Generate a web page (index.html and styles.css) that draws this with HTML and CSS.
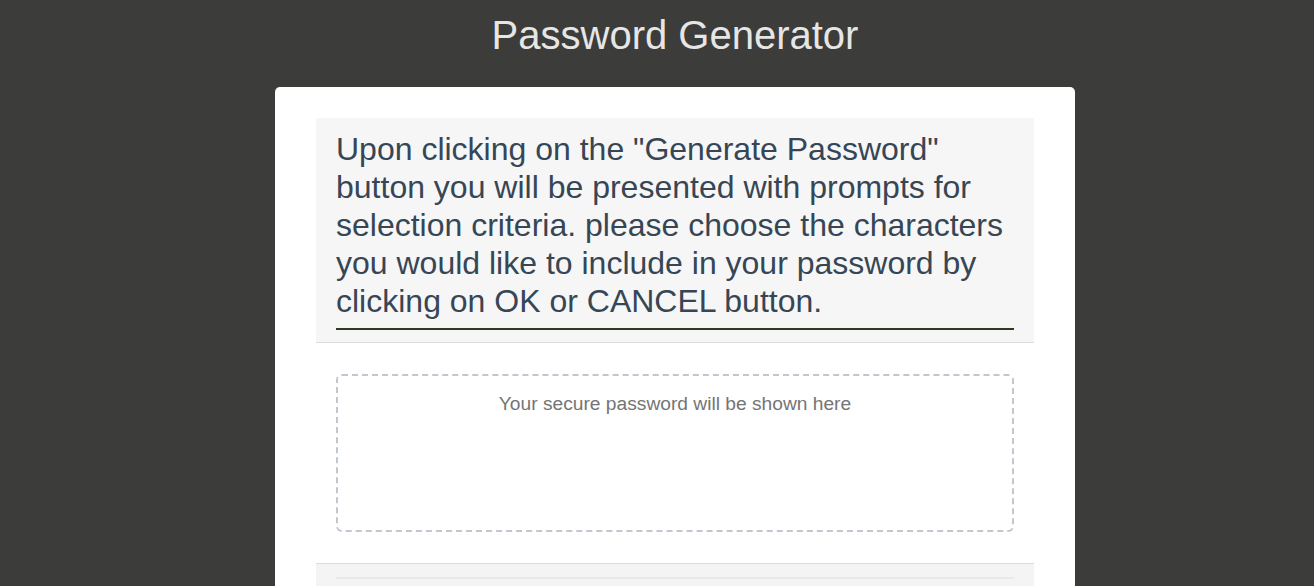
FILE: index.html
```html
<!DOCTYPE html>
<html lang="en">
<head>
<meta charset="UTF-8">
<title>Password Generator</title>
<link rel="stylesheet" href="styles.css">
</head>
<body>
<div class="wrapper">
  <header>
    <h1>Password Generator</h1>
  </header>
  <div class="card">
    <div class="card-header">
      <h2>Upon clicking on the "Generate Password" button you will be presented with prompts for selection criteria. please choose the characters you would like to include in your password by clicking on OK or CANCEL button.</h2>
    </div>
    <div class="card-body">
      <textarea readonly class="password" placeholder="Your secure password will be shown here" aria-label="Generated Password"></textarea>
    </div>
    <div class="card-footer">
      <div class="footer-line"></div>
    </div>
  </div>
</div>
</body>
</html>
```
FILE: styles.css
```css
*, *::before, *::after { box-sizing: border-box; }
html { overflow: hidden; }
html, body { margin: 0; padding: 0; height: 100%; }
body {
  font-family: "Liberation Sans", Arial, sans-serif;
  background-color: #3c3c3a;
}
.wrapper {
  padding: 0 20px 0 56px;
}
header {
  text-align: center;
  color: #e6e6e6;
  padding: 12px 0 0;
}
header h1 {
  margin: 0;
  font-size: 40px;
  font-weight: 400;
  line-height: 46px;
  height: 75px;
}
.card {
  background: #ffffff;
  border-radius: 5px;
  max-width: 800px;
  margin: 0 auto;
  padding: 31px 41px 0;
  color: #374654;
}
.card-header {
  background: #f6f6f6;
  padding: 12px 20px 12px;
  border-bottom: 1px solid #dcdcdc;
}
.card-header h2 {
  margin: 0;
  font-size: 32px;
  font-weight: 400;
  line-height: 38px;
  padding-bottom: 8px;
  border-bottom: 2px solid #2d3a1f;
}
.card-body {
  padding: 31px 20px 31px;
}
.password {
  display: block;
  width: 100%;
  height: 158px;
  border: 2px dashed #c0c7cf;
  border-radius: 6px;
  padding: 17px 15px 0;
  font-family: "Liberation Sans", Arial, sans-serif;
  font-size: 19.2px;
  text-align: center;
  resize: none;
  overflow: hidden;
  background: #fff;
  color: #757575;
}
.password::placeholder { color: #757575; opacity: 1; }
.card-footer {
  background: #f4f4f4;
  border-top: 1px solid #dcdcdc;
  padding: 13px 20px 30px;
}
.footer-line {
  height: 2px;
  background: #e7e9eb;
}
```
